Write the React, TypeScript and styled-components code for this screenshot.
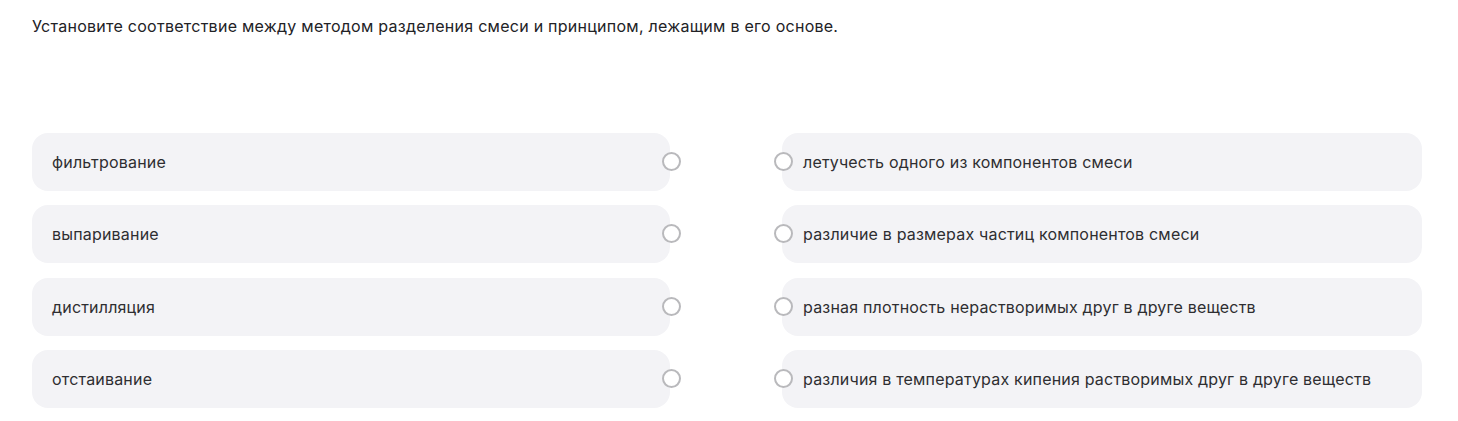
import React from "react";
import styled, { createGlobalStyle } from "styled-components";

const GlobalStyle = createGlobalStyle`
  html, body {
    margin: 0;
    padding: 0;
    background: #ffffff;
  }
  body {
    font-family: Inter, "Noto Sans", Arial, sans-serif;
    color: #2b2b2e;
  }
`;

const left = ["фильтрование", "выпаривание", "дистилляция", "отстаивание"];
const right = [
  "летучесть одного из компонентов смеси",
  "различие в размерах частиц компонентов смеси",
  "разная плотность нерастворимых друг в друге веществ",
  "различия в температурах кипения растворимых друг в друге веществ",
];

const Page = styled.div`
  padding: 16px 36px 0 32px;
`;

const Question = styled.p`
  margin: 0;
  font-size: 16px;
  letter-spacing: 0.26px;
  line-height: 20px;
  font-weight: 400;
  color: #222226;
`;

const Grid = styled.div`
  margin-top: 97px;
  display: grid;
  grid-template-columns: 638px 640px;
  column-gap: 112px;
  row-gap: 14.3px;
`;

const Item = styled.div<{ $side: "left" | "right" }>`
  position: relative;
  height: 58px;
  border-radius: 16px;
  background: #f3f3f6;
  display: flex;
  align-items: center;
  padding: 0 20px;
  padding-left: ${(p) => (p.$side === "left" ? "20px" : "21px")};
  font-size: 16px;
  letter-spacing: 0.19px;
  color: #2e2e31;
  box-sizing: border-box;
`;

const Dot = styled.span<{ $side: "left" | "right" }>`
  position: absolute;
  top: 50%;
  width: 19px;
  height: 19px;
  margin-top: -10px;
  border-radius: 50%;
  border: 2px solid #b9b9bc;
  background: #ffffff;
  box-sizing: border-box;
  ${(p) => (p.$side === "left" ? "right: -11px;" : "left: -8px;")}
`;

export default function App() {
  return (
    <>
      <GlobalStyle />
      <Page>
        <Question>
          Установите соответствие между методом разделения смеси и принципом, лежащим в его основе.
        </Question>
        <Grid>
          {left.map((l, i) => (
            <React.Fragment key={i}>
              <Item $side="left">
                {l}
                <Dot $side="left" />
              </Item>
              <Item $side="right">
                <Dot $side="right" />
                {right[i]}
              </Item>
            </React.Fragment>
          ))}
        </Grid>
      </Page>
    </>
  );
}
